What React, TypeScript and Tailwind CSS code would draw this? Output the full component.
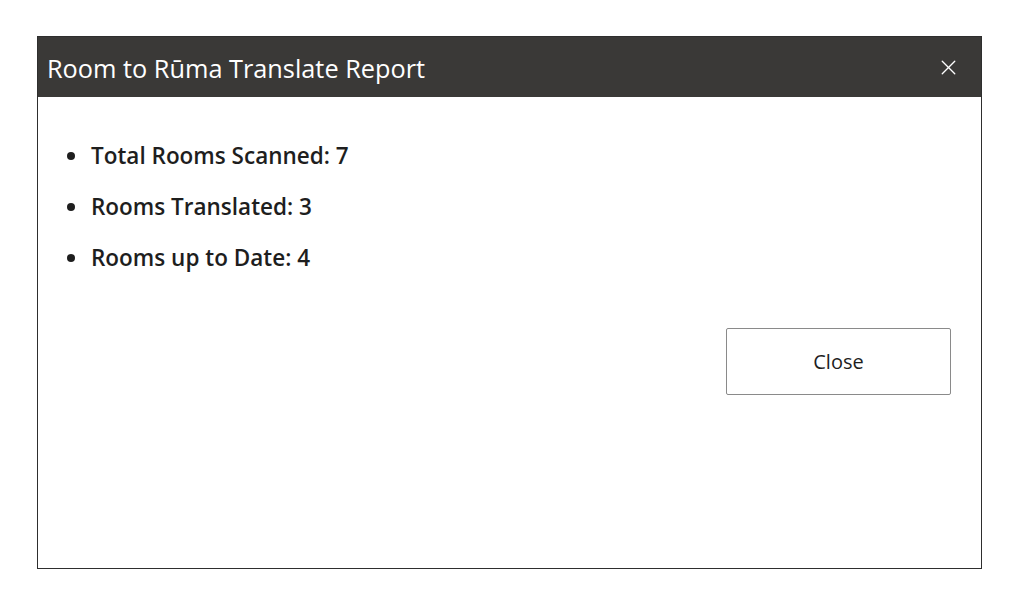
import { X } from "lucide-react";

const items = ["Total Rooms Scanned: 7", "Rooms Translated: 3", "Rooms up to Date: 4"];

export default function App() {
  return (
    <div className="w-[1015px] h-[604px] bg-white pt-[36px] pl-[37px] font-['Open_Sans',sans-serif]">
      <div className="w-[945px] h-[533px] border border-[#2e2e2e] flex flex-col bg-white">
        <div className="h-[60px] bg-[#3a3937] flex items-center justify-between pl-[9px] pr-[20px]">
          <span className="text-white text-[25.3px] pt-[3px]">Room to Rūma Translate Report</span>
          <X className="w-[25px] h-[25px] text-white" strokeWidth={1.3} />
        </div>
        <div className="flex flex-col pl-[29px] pr-[30px] pt-[44px]">
          <ul className="flex flex-col gap-[22px]">
            {items.map((t) => (
              <li key={t} className="flex items-center gap-[16px] h-[29px] text-[22.5px] font-semibold text-[#1e1e1e]">
                <span className="w-[8px] h-[8px] rounded-full bg-[#1e1e1e]" />
                {t}
              </li>
            ))}
          </ul>
          <div className="flex justify-end mt-[56px]">
            <button className="w-[225px] h-[67px] border border-[#8a8a8a] rounded-[2px] text-[20px] text-[#1e1e1e]">
              Close
            </button>
          </div>
        </div>
      </div>
    </div>
  );
}
